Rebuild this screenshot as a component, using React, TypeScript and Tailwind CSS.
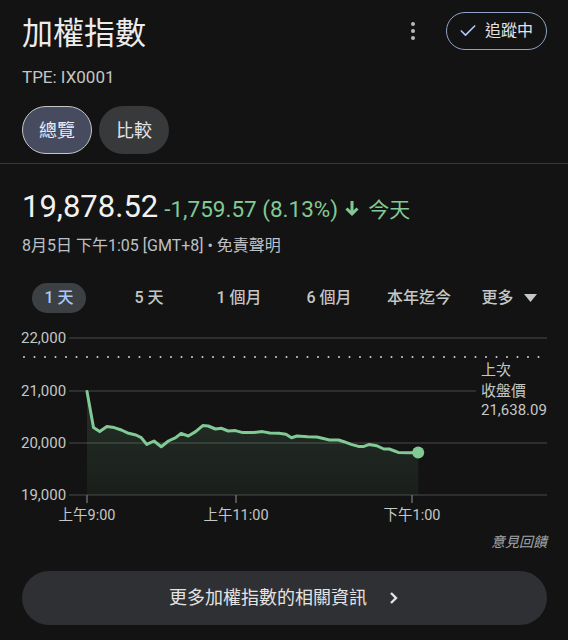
import { Check } from "lucide-react";

const font = "font-['Roboto','Noto_Sans_CJK_TC',sans-serif]";

const tabs = ["1 天", "5 天", "1 個月", "6 個月", "本年迄今"];

// price points in page px (x), chart svg is offset 320px from the top
const points: [number, number][] = [
  [87, 389.5], [93.5, 425.6], [99.7, 429.6], [106.9, 424.6], [114.1, 425.6], [121.4, 428],
  [128.6, 431.3], [135.9, 433], [141.3, 435.7], [146.7, 442.4], [154, 439], [161.2, 444.7],
  [168.4, 439], [175.7, 435.7], [181.1, 431.3], [188.3, 434], [195.6, 429.6], [202.8, 423.6],
  [208.2, 424], [215.5, 427], [221.6, 426.3], [228.2, 429], [235.4, 428.6], [242.6, 430.6],
  [253.5, 430.6], [262.5, 429.6], [269.8, 431], [278.8, 431.3], [286, 432.3], [291.5, 435.7],
  [296.9, 434], [307.8, 434.7], [316.8, 435], [322.3, 436.3], [329.5, 438], [338.5, 438],
  [344, 439.7], [351.2, 442.4], [358.4, 444.4], [363.9, 444.4], [369.3, 442.4], [376.5, 443.7],
  [383.8, 447], [389.2, 447], [394.6, 449], [398.3, 450.4], [409.1, 450.7], [418.2, 450.4],
];

const OFF = 320;
const line = points.map(([x, y], i) => `${i ? "L" : "M"}${x} ${(y - OFF).toFixed(1)}`).join(" ");
const area = `${line} L418.2 173 L87 173 Z`;

const grid = [
  { y: 16, label: "22,000", end: 547 },
  { y: 69, label: "21,000", end: 476 },
  { y: 121, label: "20,000", end: 547 },
  { y: 173, label: "19,000", end: 547 },
];

const ticks = [
  { x: 87, label: "上午9:00" },
  { x: 236, label: "上午11:00" },
  { x: 412, label: "下午1:00" },
];

function Chart() {
  return (
    <svg width="568" height="210" viewBox="0 0 568 210" className="block">
      <defs>
        <linearGradient id="fill" x1="0" y1="0" x2="0" y2="1">
          <stop offset="0%" stopColor="#81c995" stopOpacity="0.16" />
          <stop offset="100%" stopColor="#81c995" stopOpacity="0.06" />
        </linearGradient>
      </defs>
      {grid.map((g) => (
        <g key={g.label}>
          <line x1="69" x2={g.end} y1={g.y} y2={g.y} stroke="#4a4a4a" strokeWidth="1" />
          <text x="21" y={g.y + 5} fill="#c4c7c5" fontSize="15" fontFamily="Roboto, sans-serif">
            {g.label}
          </text>
        </g>
      ))}
      <line x1="24" x2="547" y1="35" y2="35" stroke="#d0d0d0" strokeWidth="2" strokeLinecap="round" strokeDasharray="0 10.5" />
      <path d={area} fill="url(#fill)" />
      <path d={line} fill="none" stroke="#81c995" strokeWidth="3" strokeLinejoin="round" strokeLinecap="round" />
      <circle cx="418.2" cy={450.4 - OFF} r="6" fill="#81c995" />
      {ticks.map((t) => (
        <g key={t.label}>
          <line x1={t.x} x2={t.x} y1="173" y2="181" stroke="#6a6a6a" strokeWidth="1.5" />
          <text x={t.x} y="198" textAnchor="middle" fill="#c4c7c5" fontSize="14.5" fontFamily="Roboto, 'Noto Sans CJK TC', sans-serif">
            {t.label}
          </text>
        </g>
      ))}
      <g fill="#c4c7c5" fontSize="15" fontFamily="Roboto, 'Noto Sans CJK TC', sans-serif">
        <text x="481" y="53">上次</text>
        <text x="481" y="74">收盤價</text>
        <text x="481" y="93">21,638.09</text>
      </g>
    </svg>
  );
}

export default function App() {
  return (
    <div className={`h-[640px] w-[568px] overflow-hidden bg-[#131313] text-[#e3e3e3] ${font}`}>
      <header className="flex items-start justify-between pl-[22px] pr-[21px] pt-[12px]">
        <div className="pt-[2px]">
          <h1 className="text-[31px] leading-[40px] text-[#ececec]">加權指數</h1>
          <div className="mt-[11px] text-[17px] leading-6 text-[#c4c7c5]">TPE: IX0001</div>
        </div>
        <div className="flex items-center gap-[31px]">
          <div className="flex flex-col gap-[3px]">
            <span className="h-[4px] w-[4px] rounded-full bg-[#b8bbbe]" />
            <span className="h-[4px] w-[4px] rounded-full bg-[#b8bbbe]" />
            <span className="h-[4px] w-[4px] rounded-full bg-[#b8bbbe]" />
          </div>
          <button className="flex h-[38px] items-center gap-[7px] rounded-full border border-[#8fa3c6] pl-[11px] pr-[13px]">
            <Check size={20} strokeWidth={2} className="text-[#a8c7fa]" />
            <span className="text-[16px] text-[#e3e3e3]">追蹤中</span>
          </button>
        </div>
      </header>

      <div className="mt-[17px] flex gap-[7px] pl-[22px]">
        <button className="flex h-[48px] w-[70px] items-center justify-center rounded-full border border-[#c4c7c5] bg-[#464b60] text-[18px] text-[#e8eaf6]">
          總覽
        </button>
        <button className="flex h-[48px] w-[70px] items-center justify-center rounded-full bg-[#38393b] text-[18px] text-[#e3e3e3]">
          比較
        </button>
      </div>

      <div className="mt-[9px] border-t border-[#383838]" />

      <section className="pl-[22px] pt-[25px]">
        <div className="flex items-baseline">
          <span className="text-[31px] leading-[36px] text-[#f1f1f1]">19,878.52</span>
          <span className="ml-[6px] text-[22.5px] text-[#81c995]">-1,759.57 (8.13%)</span>
          <svg width="16" height="18" viewBox="0 0 16 18" className="ml-[6px] self-center">
            <path d="M8 2 V15 M2.5 9.5 L8 15 L13.5 9.5" stroke="#81c995" strokeWidth="3" fill="none" />
          </svg>
          <span className="ml-[8px] text-[21px] text-[#81c995]">今天</span>
        </div>
        <div className="mt-[9px] text-[16px] leading-5 text-[#bdc1c6]">8月5日 下午1:05 [GMT+8] • 免責聲明</div>
      </section>

      <nav className="mt-[27px] grid grid-cols-6 px-[14px]">
        {tabs.map((t, i) => (
          <div key={t} className="flex justify-center">
            <span
              className={`flex h-[30px] items-center rounded-full px-[12px] text-[16px] font-medium ${
                i === 0 ? "bg-[#3d4043] text-[#a8c7fa]" : "text-[#c4c7c5]"
              }`}
            >
              {t}
            </span>
          </div>
        ))}
        <div className="flex items-center justify-center gap-[10px] text-[16px] font-medium text-[#c4c7c5]">
          <span>更多</span>
          <svg width="13" height="8" viewBox="0 0 13 8">
            <path d="M0 0 H13 L6.5 8 Z" fill="#c4c7c5" />
          </svg>
        </div>
      </nav>

      <div className="mt-[9px]">
        <Chart />
      </div>

      <div className="flex justify-end pr-[21px] text-[14px] italic leading-5 text-[#a0a4a8]">意見回饋</div>

      <button className="mx-auto mt-[19px] flex h-[54px] w-[525px] items-center justify-center gap-[22px] rounded-full bg-[#2f3033] text-[18px] text-[#e3e3e3]">
        <span>更多加權指數的相關資訊</span>
        <svg width="10" height="14" viewBox="0 0 10 14">
          <path d="M2 2 L7 7 L2 12" stroke="#e3e3e3" strokeWidth="2.4" fill="none" />
        </svg>
      </button>
    </div>
  );
}
